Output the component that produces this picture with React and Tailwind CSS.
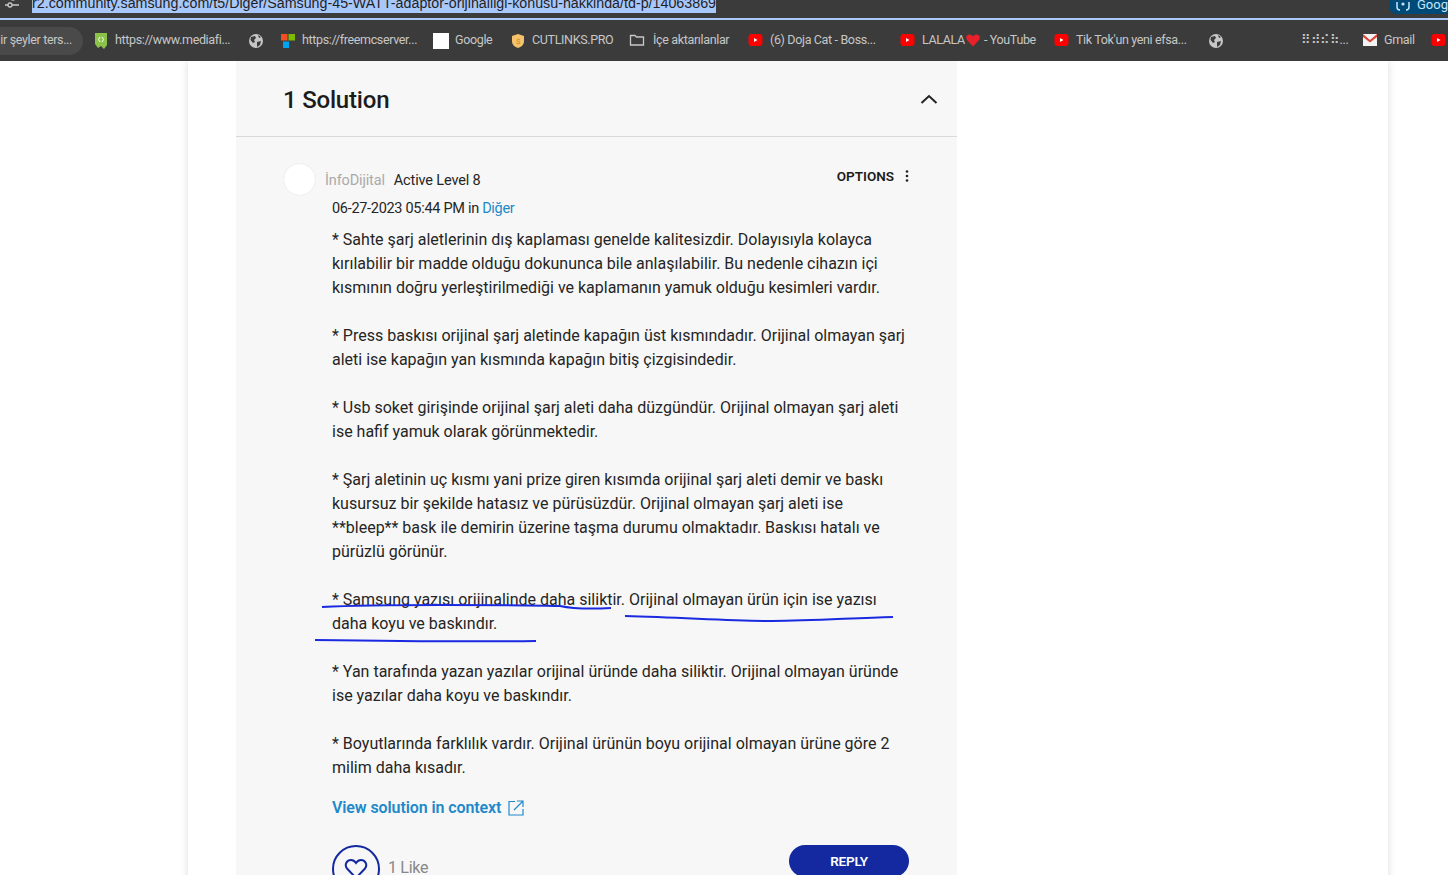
const font = { fontFamily: 'Roboto, "Noto Sans", sans-serif' };

const paragraphs = [
  ['* Sahte şarj aletlerinin dış kaplaması genelde kalitesizdir. Dolayısıyla kolayca', 'kırılabilir bir madde olduğu dokununca bile anlaşılabilir. Bu nedenle cihazın içi', 'kısmının doğru yerleştirilmediği ve kaplamanın yamuk olduğu kesimleri vardır.'],
  ['* Press baskısı orijinal şarj aletinde kapağın üst kısmındadır. Orijinal olmayan şarj', 'aleti ise kapağın yan kısmında kapağın bitiş çizgisindedir.'],
  ['* Usb soket girişinde orijinal şarj aleti daha düzgündür. Orijinal olmayan şarj aleti', 'ise hafif yamuk olarak görünmektedir.'],
  ['* Şarj aletinin uç kısmı yani prize giren kısımda orijinal şarj aleti demir ve baskı', 'kusursuz bir şekilde hatasız ve pürüsüzdür. Orijinal olmayan şarj aleti ise', '**bleep** bask ile demirin üzerine taşma durumu olmaktadır. Baskısı hatalı ve', 'pürüzlü görünür.'],
  ['* Samsung yazısı orijinalinde daha siliktir. Orijinal olmayan ürün için ise yazısı', 'daha koyu ve baskındır.'],
  ['* Yan tarafında yazan yazılar orijinal üründe daha siliktir. Orijinal olmayan üründe', 'ise yazılar daha koyu ve baskındır.'],
  ['* Boyutlarında farklılık vardır. Orijinal ürünün boyu orijinal olmayan ürüne göre 2', 'milim daha kısadır.'],
];

function Globe() {
  return (
    <svg width="16" height="16" viewBox="0 0 16 16" className="shrink-0">
      <circle cx="8" cy="8" r="7" fill="#c4c7c5" />
      <path d="M3 4 L7 3 L8 5 L6 7 L7 9 L5 10 L2.5 7 Z M9 9 L13 8 L12 12 L9 14 Z M10 2 L13 4 L11 5 Z" fill="#3b3b3b" />
    </svg>
  );
}

function YouTube() {
  return (
    <svg width="16" height="16" viewBox="0 0 16 16" className="shrink-0">
      <rect x="0.5" y="1" width="14" height="12" rx="3" fill="#f00" />
      <path d="M6 5 L9.5 7 L6 9 Z" fill="#fff" />
    </svg>
  );
}

function Bookmark({ icon, label, className }) {
  return (
    <div className={`flex items-center gap-[6px] shrink-0 whitespace-nowrap ${className || ''}`}>
      {icon}
      <span>{label}</span>
    </div>
  );
}

function Bookmarks() {
  return (
    <div className="h-[41px] flex items-center text-[12.5px] text-[#c7c7c7] overflow-hidden tracking-[-0.35px]">
      <div className="h-[28px] w-[83px] shrink-0 rounded-r-full bg-[#4a4a4a] flex items-center justify-end pr-[11px] whitespace-nowrap">ir şeyler ters...</div>
      <Bookmark className="ml-[11px] w-[154px] gap-[7px]" label="https://www.mediafi..." icon={
        <svg width="14" height="18" viewBox="0 0 14 18" className="shrink-0"><path d="M1 1 H13 V13 L10 17 L7 14 L4 16 L1 12 Z" fill="#8bc34a" /><path d="M6 5 L4.5 7.5 L6 10 M8 5 L9.5 7.5 L8 10" stroke="#fff" fill="none" /></svg>
      } />
      <Bookmark className="w-[32px]" label="" icon={<Globe />} />
      <Bookmark className="w-[153px] gap-[5px]" label="https://freemcserver..." icon={
        <svg width="16" height="16" viewBox="0 0 16 16" className="shrink-0"><rect x="1" y="1" width="6.5" height="6.5" fill="#f25022" /><rect x="8.5" y="1" width="6.5" height="6.5" fill="#7fba00" /><rect x="3" y="8.5" width="6" height="6.5" fill="#00a4ef" /></svg>
      } />
      <Bookmark className="w-[77px]" label="Google" icon={<span className="w-[16px] h-[16px] bg-white shrink-0" />} />
      <Bookmark className="w-[119px]" label="CUTLINKS.PRO" icon={
        <svg width="16" height="16" viewBox="0 0 16 16" className="shrink-0"><path d="M8 1 L14 3 V8 C14 12 11 14 8 15 C5 14 2 12 2 8 V3 Z" fill="#f5c26b" /><text x="8" y="11" fontSize="8" textAnchor="middle" fill="#c98a1e">$</text></svg>
      } />
      <Bookmark className="w-[119px] gap-[8px]" label="İçe aktarılanlar" icon={
        <svg width="16" height="16" viewBox="0 0 16 16" className="shrink-0"><path d="M1.5 2.5 H6 L7.5 4 H14.5 V12 H1.5 Z" fill="none" stroke="#c7c7c7" strokeWidth="1.3" /></svg>
      } />
      <Bookmark className="w-[152px] gap-[4px]" label="(6) Doja Cat - Boss..." icon={<YouTube />} />
      <Bookmark className="w-[154px]" label={
        <span className="flex items-center">LALALA
          <svg width="14" height="13" viewBox="0 0 14 13" className="mx-[1px]"><path d="M7 12.5 L1 6 C-1 3 1 .5 3.5 .5 C5 .5 6.3 1.3 7 2.5 C7.7 1.3 9 .5 10.5 .5 C13 .5 15 3 13 6 Z" fill="#e8202a" /></svg>
          <span className="ml-[3px]">- YouTube</span>
        </span>
      } icon={<YouTube />} />
      <Bookmark className="w-[154px] gap-[5px]" label="Tik Tok'un yeni efsa..." icon={<YouTube />} />
      <Bookmark className="w-[93px]" label="" icon={<Globe />} />
      <Bookmark className="w-[61px]" label="⠿⠾⠮⠷..." icon={null} />
      <Bookmark className="w-[69px] gap-[5px]" label="Gmail" icon={
        <svg width="16" height="16" viewBox="0 0 16 16" className="shrink-0"><rect x="1" y="1" width="14" height="12" fill="#f3f3f3" /><path d="M1 1 L8 7 L15 1 V4 L8 9.5 L1 4 Z" fill="#db4437" /></svg>
      } />
      <YouTube />
    </div>
  );
}

export default function App() {
  return (
    <div className="h-[875px] w-[1448px] overflow-hidden bg-white flex flex-col" style={font}>
      <div className="bg-[#3b3b3b] shrink-0 relative z-10">
        <div className="h-[20px] border-b-2 border-[#a8c7fa] flex relative overflow-hidden">
          <svg width="16" height="16" viewBox="0 0 16 16" className="absolute left-[4px] top-[-6px]">
            <path d="M1 4 H7 M11 4 H15 M1 11 H4 M8 11 H15" stroke="#c7c7c7" strokeWidth="1.4" />
            <circle cx="9" cy="4" r="2" fill="none" stroke="#c7c7c7" strokeWidth="1.3" />
            <circle cx="6" cy="11" r="2" fill="none" stroke="#c7c7c7" strokeWidth="1.3" />
          </svg>
          <div className="ml-[32px] h-[13px] bg-[#a8c7fa] text-[#1f1f1f] text-[14.27px] leading-[13px] whitespace-nowrap w-[684px]" style={{ fontFamily: '"Liberation Sans", sans-serif' }}>
            <span className="relative top-[-3px]">r2.community.samsung.com/t5/Diger/Samsung-45-WATT-adaptor-orijinalligi-konusu-hakkinda/td-p/14063869</span>
          </div>
          <div className="ml-auto h-[14px] w-[59px] rounded-bl-[8px] bg-[#004a77] text-[#c2e7ff] text-[13px] leading-[9px] flex items-start gap-[6px] pl-[6px] whitespace-nowrap">
            <svg width="16" height="12" viewBox="0 0 16 12" className="shrink-0" fill="none" stroke="#c2e7ff" strokeWidth="1.5">
              <path d="M2 2 V7 Q2 10 5 10 M11 10 Q14 10 14 7 V2" />
              <circle cx="8" cy="4" r="1.6" fill="#c2e7ff" stroke="none" />
            </svg>
            <span>Goog</span>
          </div>
        </div>
        <Bookmarks />
      </div>

      <div className="flex-1 mx-[188px] w-[1200px] bg-white shadow-[0_0_8px_rgba(0,0,0,0.14)] pl-[48px]">
        <div className="w-[721px] h-full bg-[#f7f7f7] text-[#252525]">
          <div className="h-[76px] border-b border-[#d9d9d9] flex items-center justify-between pl-[47px] pr-[18px]">
            <h2 className="mt-[2px] text-[24px] font-medium tracking-[-0.2px] text-[#1c1c1c]">1 Solution</h2>
            <svg width="20" height="12" viewBox="0 0 20 12"><path d="M2.5 10 L10 3 L17.5 10" fill="none" stroke="#222" strokeWidth="2" /></svg>
          </div>

          <div className="pl-[47px] pr-[48px] pt-[26px] relative">
            <div className="flex items-start">
              <div className="w-[33px] h-[33px] rounded-full bg-white border border-[#eeeeee] shrink-0" />
              <div className="ml-[9px] mt-[8px] text-[14.5px] leading-[20px] tracking-[-0.15px] text-[#aaaaaa]">İnfoDijital</div>
              <div className="ml-[9px] mt-[8px] text-[14.5px] leading-[20px] tracking-[-0.15px] text-[#252525]">Active Level 8</div>
              <div className="ml-auto mt-[4px] flex items-center gap-[11px] text-[13.5px] font-semibold leading-[18px] text-[#1c1c1c]">
                OPTIONS
                <svg width="4" height="12" viewBox="0 0 4 12"><circle cx="2" cy="1.5" r="1.3" fill="#222" /><circle cx="2" cy="6" r="1.3" fill="#222" /><circle cx="2" cy="10.5" r="1.3" fill="#222" /></svg>
              </div>
            </div>
            <div className="ml-[49px] mt-[3px] text-[14.5px] leading-[20px] tracking-[-0.3px]">
              06-27-2023 05:44 PM in <span className="text-[#2189ca]">Diğer</span>
            </div>

            <div className="ml-[49px] mt-[9px] text-[16px] leading-[24px] relative whitespace-nowrap">
              {paragraphs.map((lines, i) => (
                <p key={i} className="mb-[24px]">
                  {lines.map(line => <span key={line} className="block">{line}</span>)}
                </p>
              ))}
              <svg width="600" height="60" viewBox="0 0 600 60" className="absolute left-[-20px] top-[358px] pointer-events-none" fill="none" stroke="#1a2ae0" strokeWidth="2">
                <path d="M10 21 C50 19 90 19 130 19 C180 19 220 19 248 20 C262 23 280 23 299 22" />
                <path d="M313 30 C380 32 420 35 460 35 C500 35 540 32 581 31" />
                <path d="M3 54 C70 55 150 56 224 55" />
              </svg>
            </div>

            <div className="ml-[49px] mt-[-8px] flex items-center gap-[7px] text-[16px] leading-[24px] font-semibold tracking-[-0.1px] text-[#2189ca] h-[24px]">
              View solution in context
              <svg width="16" height="16" viewBox="0 0 16 16" fill="none" stroke="#2189ca" strokeWidth="1.2"><path d="M7 1.5 H1 V15 H15 V9 M9 1 H15 V7 M15 1 L6 10" /></svg>
            </div>

            <div className="ml-[49px] mt-[25px] flex items-start justify-between">
              <div className="flex items-start">
                <div className="w-[48px] h-[48px] rounded-full border-2 border-[#1428a0] flex items-center justify-center shrink-0">
                  <svg width="24" height="22" viewBox="0 0 24 22" fill="none" stroke="#1428a0" strokeWidth="2"><path d="M12 20 L3 10.5 C0 6.5 3 2 7 2 C9.5 2 11 3.5 12 5 C13 3.5 14.5 2 17 2 C21 2 24 6.5 21 10.5 Z" /></svg>
                </div>
                <span className="ml-[8px] mt-[11px] text-[16px] leading-[24px] text-[#888888] tracking-[-0.3px]">1 Like</span>
              </div>
              <button className="w-[120px] h-[32px] rounded-full bg-[#1428a0] text-white text-[13.5px] font-semibold tracking-[-0.2px]">REPLY</button>
            </div>
          </div>
        </div>
      </div>
    </div>
  );
}
